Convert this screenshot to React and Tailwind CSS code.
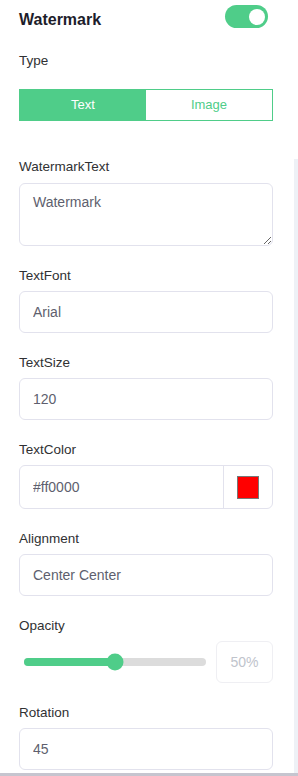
import { useState } from 'react'

const GREEN = '#4fcd89'

function Field({ label, first, children }) {
  return (
    <div className={first ? '' : 'mt-[20px]'}>
      <div className={`text-[13.5px] leading-5 text-[#303133] ${first ? 'mb-[6px]' : 'mb-[5px]'}`}>{label}</div>
      {children}
    </div>
  )
}

function TextInput({ value }) {
  return (
    <input
      type="text"
      readOnly
      value={value}
      className="block w-full min-w-0 h-[42px] px-[13px] rounded-[6px] border border-[#e2e2ed] bg-white text-[14px] text-[#5e5f6e] outline-none"
    />
  )
}

export default function App() {
  const [enabled, setEnabled] = useState(true)
  const [type, setType] = useState('text')
  const opacity = 50

  return (
    <div className="h-[776px] w-full flex flex-col bg-white overflow-hidden font-['Liberation_Sans',Arial,sans-serif]">
      <div className="pl-[19px] pr-[25px] pt-[5px]">
        <div className="flex items-start justify-between">
          <div className="mt-[5px] text-[16px] leading-5 font-bold text-[#1d1d2b]">Watermark</div>
          <button
            onClick={() => setEnabled(!enabled)}
            className="mr-[5px] w-[43px] h-[23px] rounded-full flex items-center justify-end pr-[3px]"
            style={{ backgroundColor: enabled ? GREEN : '#dcdfe6' }}
          >
            <span className="w-[16px] h-[16px] rounded-full bg-white" />
          </button>
        </div>

        <div className="mt-[21px] text-[13.5px] leading-5 text-[#303133]">Type</div>

        <div className="mt-[18px] grid grid-cols-2 h-[32px] border border-[#4fcd89]">
          <button
            onClick={() => setType('text')}
            className={`text-[13px] ${type === 'text' ? 'bg-[#4fcd89] text-white' : 'bg-white text-[#4fcd89]'}`}
          >
            Text
          </button>
          <button
            onClick={() => setType('image')}
            className={`text-[13px] ${type === 'image' ? 'bg-[#4fcd89] text-white' : 'bg-white text-[#4fcd89]'}`}
          >
            Image
          </button>
        </div>
      </div>

      <div className="mt-[36px] flex-1 min-h-0 flex overflow-hidden">
        <div className="flex-1 min-w-0 pl-[19px] pr-[21px]">
          <Field label="WatermarkText" first>
            <textarea
              readOnly
              defaultValue="Watermark"
              className="block w-full min-w-0 h-[63px] pt-[8px] px-[13px] rounded-[6px] border border-[#e2e2ed] bg-white text-[14px] leading-5 text-[#5e5f6e] outline-none resize-y"
            />
          </Field>

          <Field label="TextFont">
            <TextInput value="Arial" />
          </Field>

          <Field label="TextSize">
            <TextInput value="120" />
          </Field>

          <Field label="TextColor">
            <div className="flex h-[44px] rounded-[6px] border border-[#e2e2ed] bg-white">
              <input
                type="text"
                readOnly
                value="#ff0000"
                className="flex-1 min-w-0 px-[13px] bg-transparent text-[14px] text-[#5e5f6e] outline-none"
              />
              <div className="w-[49px] border-l border-[#e2e2ed] flex items-center justify-center">
                <span className="w-[22px] h-[23px] bg-[#ff0000] border border-[#777777]" />
              </div>
            </div>
          </Field>

          <Field label="Alignment">
            <TextInput value="Center Center" />
          </Field>

          <Field label="Opacity">
            <div className="flex items-center h-[42px]">
              <div className="flex-1 min-w-0 px-[5px]">
                <div className="relative h-[8px] rounded-full bg-[#dcdcdc]">
                  <div className="absolute left-0 top-0 h-full rounded-full bg-[#4fcd89]" style={{ width: `${opacity}%` }} />
                  <div
                    className="absolute top-1/2 w-[17px] h-[17px] -translate-x-1/2 -translate-y-1/2 rounded-full bg-[#4fcd89]"
                    style={{ left: `${opacity}%` }}
                  />
                </div>
              </div>
              <div className="ml-[5px] w-[57px] h-[42px] rounded-[6px] border border-[#efeff3] flex items-center justify-center text-[14px] text-[#c0c4cc]">
                {opacity}%
              </div>
            </div>
          </Field>

          <Field label="Rotation">
            <TextInput value="45" />
          </Field>
        </div>
        <div className="w-[4px] mt-[2px] bg-[#eef1f6]" />
      </div>

      <div className="h-[3px] bg-[#c6c5cf]" />
    </div>
  )
}
